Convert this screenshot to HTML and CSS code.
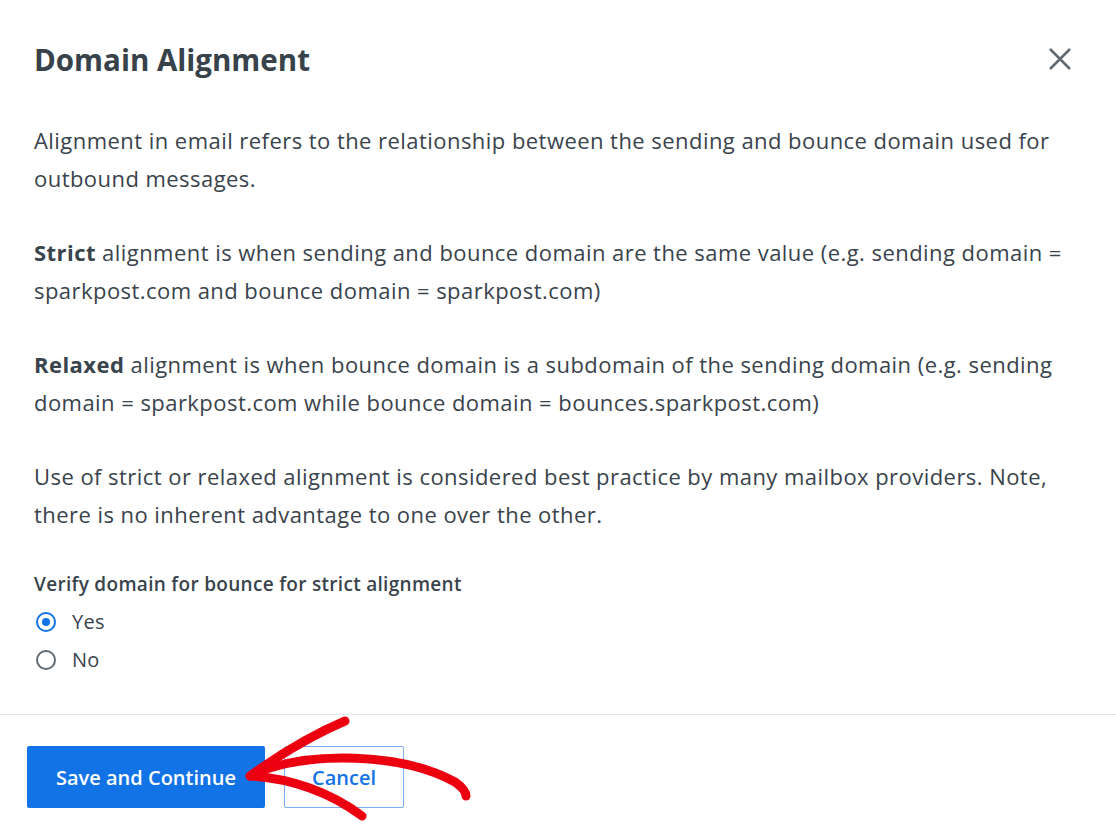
FILE: index.html
```html
<!DOCTYPE html>
<html lang="en">
<head>
    <meta charset="UTF-8">
    <title>Domain Alignment</title>
    <link rel="stylesheet" href="styles.css">
</head>
<body>
<div class="modal">
    <div class="modal-body">
        <div class="modal-header">
            <h2>Domain Alignment</h2>
            <button class="close" aria-label="Close">
                <svg width="24" height="24" viewBox="0 0 24 24"><path d="M2 2 L22 22 M22 2 L2 22" stroke="#5f6a73" stroke-width="2.6" fill="none"/></svg>
            </button>
        </div>
        <p>Alignment in email refers to the relationship between the sending and bounce domain used for outbound messages.</p>
        <p><strong>Strict</strong> alignment is when sending and bounce domain are the same value (e.g. sending domain = sparkpost.com and bounce domain = sparkpost.com)</p>
        <p><strong>Relaxed</strong> alignment is when bounce domain is a subdomain of the sending domain (e.g. sending domain = sparkpost.com while bounce domain = bounces.sparkpost.com)</p>
        <p>Use of strict or relaxed alignment is considered best practice by many mailbox providers. Note, there is no inherent advantage to one over the other.</p>
        <div class="field">
            <div class="field-label">Verify domain for bounce for strict alignment</div>
            <label class="radio"><span class="dot checked"></span>Yes</label>
            <label class="radio"><span class="dot"></span>No</label>
        </div>
    </div>
    <div class="modal-footer">
        <button class="btn primary">Save and Continue</button>
        <button class="btn outline">Cancel</button>
    </div>
</div>
<svg class="arrow" width="1116" height="833" viewBox="0 0 1116 833">
    <g stroke="#ec0010" stroke-width="9" stroke-linecap="round" stroke-linejoin="round" fill="none">
        <path d="M250 776 C 275 758, 305 738, 345 721"/>
        <path d="M250 776 C 290 778, 330 792, 362 816"/>
        <path d="M258 772 C 310 752, 400 752, 455 782 C 462 787, 466 792, 466 796"/>
    </g>
</svg>
</body>
</html>
```

FILE: styles.css
```css
body {
    margin: 0;
    background: #ffffff;
    font-family: 'Open Sans', 'Liberation Sans', sans-serif;
    color: #39434c;
}
.modal {
    width: 1116px;
    height: 833px;
    position: relative;
}
.modal-body {
    padding: 0 34px;
    height: 715px;
    box-sizing: border-box;
    border-bottom: 1px solid #e3e6e9;
}
.modal-header {
    display: flex;
    justify-content: space-between;
    align-items: center;
    height: 121px;
}
.modal-header h2 {
    margin: -3px 0 0;
    font-size: 29.5px;
    font-weight: 700;
    color: #37424b;
}
.close {
    background: none;
    border: 0;
    padding: 0;
    margin: -4px 10px 0 0;
    display: flex;
}
p {
    margin: 0 0 36px;
    font-size: 22px;
    line-height: 38px;
    letter-spacing: 0.45px;
}
strong {
    font-weight: 700;
}
.field {
    margin-top: 5px;
}
.field-label {
    font-size: 19px;
    font-weight: 600;
    line-height: 30px;
    margin-bottom: 4px;
    letter-spacing: 0.3px;
}
.radio {
    display: flex;
    align-items: center;
    font-size: 20px;
    line-height: 38px;
    letter-spacing: 0.3px;
}
.dot {
    width: 20px;
    height: 20px;
    border: 2px solid #5f6a73;
    border-radius: 50%;
    margin: 0 16px 0 2px;
    box-sizing: border-box;
    position: relative;
}
.dot.checked {
    border-color: #1273e6;
}
.dot.checked::after {
    content: '';
    position: absolute;
    left: 4px;
    top: 4px;
    width: 8px;
    height: 8px;
    border-radius: 50%;
    background: #1273e6;
}
.modal-footer {
    display: flex;
    gap: 19px;
    padding: 31px 27px 0;
}
.btn {
    height: 62px;
    font-family: inherit;
    font-size: 20px;
    font-weight: 600;
    border-radius: 2px;
    cursor: pointer;
}
.primary {
    width: 238px;
    background: #1273e6;
    color: #ffffff;
    border: 0;
}
.outline {
    width: 120px;
    background: #ffffff;
    color: #1273e6;
    border: 1px solid #7aaef0;
}
.arrow {
    position: absolute;
    left: 0;
    top: 0;
    pointer-events: none;
}
```
